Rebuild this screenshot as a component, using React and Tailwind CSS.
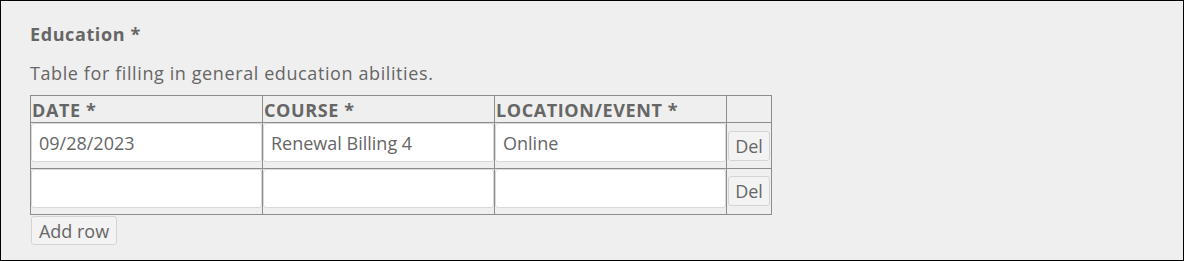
import {useState} from "react";

export default function App() {
  const [rows, setRows] = useState([
    {date: "09/28/2023", course: "Renewal Billing 4", location: "Online"},
    {date: "", course: "", location: ""},
  ]);

  const updateRow = (index, key, value) => {
    setRows(rows.map((row, i) => (i === index ? {...row, [key]: value} : row)));
  };

  const inputClass =
    "block w-full h-[39px] bg-white border border-[#d9d9d9] rounded-[3px] px-[7px] text-[18px] text-[#666] outline-none";
  const thClass =
    "w-[232px] border border-[#8c8c8c] px-px pt-[2px] text-left align-middle text-[18px] leading-[22px] tracking-[0.6px] font-bold uppercase";

  return (
    <div className="w-[1184px] h-[261px] bg-[#efefef] border border-black text-[#666] font-['Open_Sans',sans-serif]">
      <div className="pl-[29px] pt-[21px]">
        <h2 className="text-[18px] leading-[24px] tracking-[0.6px] font-bold text-[#666]">Education *</h2>
        <p className="mt-[15px] text-[18px] leading-[24px] tracking-[0.6px]">
          Table for filling in general education abilities.
        </p>
        <table className="mt-[10px] border-collapse border border-[#8c8c8c] table-fixed w-[741px]">
          <thead>
            <tr className="h-[27px]">
              <th className={thClass}>Date *</th>
              <th className={thClass}>Course *</th>
              <th className={thClass}>Location/Event *</th>
              <th className="w-[45px] border border-[#8c8c8c]"></th>
            </tr>
          </thead>
          <tbody>
            {rows.map((row, i) => (
              <tr key={i} className="h-[46px]">
                <td className="border border-[#8c8c8c] p-0 align-top">
                  <input className={inputClass} value={row.date} onChange={(e) => updateRow(i, "date", e.target.value)}/>
                </td>
                <td className="border border-[#8c8c8c] p-0 align-top">
                  <input className={inputClass} value={row.course} onChange={(e) => updateRow(i, "course", e.target.value)}/>
                </td>
                <td className="border border-[#8c8c8c] p-0 align-top">
                  <input className={inputClass} value={row.location} onChange={(e) => updateRow(i, "location", e.target.value)}/>
                </td>
                <td className={"border border-[#8c8c8c] px-px align-top " + (i === 0 ? "pt-[8px]" : "pt-[7px]")}>
                  <button
                    className="block w-[42px] h-[30px] bg-[#f3f3f3] border border-[#d4d4d4] rounded-[3px] text-[18px] text-[#666] leading-none"
                    onClick={() => setRows(rows.filter((_, j) => j !== i))}
                  >
                    Del
                  </button>
                </td>
              </tr>
            ))}
          </tbody>
        </table>
        <button
          className="mt-[1px] ml-px h-[29px] w-[86px] bg-[#f3f3f3] border border-[#d4d4d4] rounded-[3px] text-[18px] text-[#666] leading-none"
          onClick={() => setRows([...rows, {date: "", course: "", location: ""}])}
        >
          Add row
        </button>
      </div>
    </div>
  );
}
